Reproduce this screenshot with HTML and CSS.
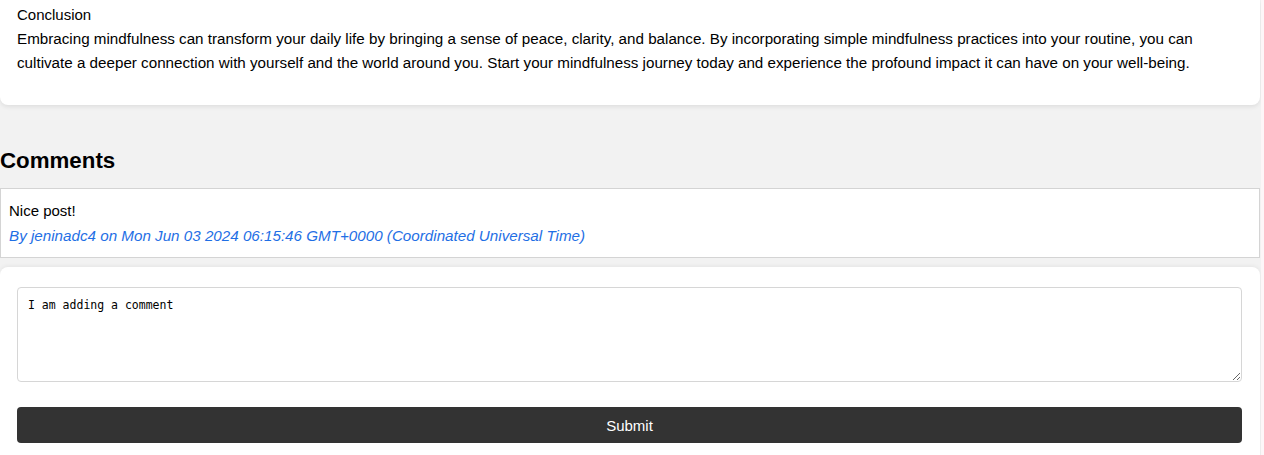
FILE: index.html
```html
<!DOCTYPE html>
<html lang="en">
<head>
<meta charset="utf-8">
<title>Post</title>
<link rel="stylesheet" href="styles.css">
</head>
<body>
<div class="page">
  <article class="post-card">
    <div class="post-line">Conclusion</div>
    <p class="post-text">Embracing mindfulness can transform your daily life by bringing a sense of peace, clarity, and balance. By incorporating simple mindfulness practices into your routine, you can cultivate a deeper connection with yourself and the world around you. Start your mindfulness journey today and experience the profound impact it can have on your well-being.</p>
  </article>

  <section class="comments">
    <h2 class="comments-title">Comments</h2>
    <div class="comment">
      <div class="comment-text">Nice post!</div>
      <div class="comment-meta">By jeninadc4 on Mon Jun 03 2024 06:15:46 GMT+0000 (Coordinated Universal Time)</div>
    </div>
    <form class="comment-form">
      <textarea class="comment-input">I am adding a comment</textarea>
      <button type="button" class="submit-btn">Submit</button>
    </form>
  </section>
</div>
</body>
</html>
```

FILE: styles.css
```css
html {
  background: #fdf6f8;
}
body {
  margin: 0;
  width: 1261px;
  background: #f2f2f2;
  font-family: "Liberation Sans", Arial, sans-serif;
  color: #000;
  min-height: 455px;
}
.page {
  width: 1260px;
}
.post-card {
  background: #fff;
  border-radius: 0 0 8px 8px;
  box-shadow: 0 2px 4px rgba(0, 0, 0, 0.08);
  padding: 3px 17px 30px 17px;
}
.post-line {
  font-size: 15px;
  line-height: 24px;
}
.post-text {
  margin: 0;
  font-size: 15.2px;
  line-height: 24px;
}
.comments-title {
  margin: 42px 0 13px 0;
  font-size: 22.3px;
  line-height: 28px;
  font-weight: bold;
}
.comment {
  background: #fff;
  border: 1px solid #d4d4d4;
  padding: 9px 8px;
  font-size: 15px;
  line-height: 25px;
}
.comment-meta {
  font-style: italic;
  font-size: 15.2px;
  color: #1f6fe5;
}
.comment-form {
  margin-top: 9px;
  background: #fff;
  border-radius: 8px 8px 0 0;
  box-shadow: 0 -1px 4px rgba(0, 0, 0, 0.06);
  padding: 20px 18px 20px 17px;
}
.comment-input {
  display: block;
  box-sizing: border-box;
  width: 100%;
  height: 95px;
  border: 1px solid #d6d6d6;
  border-radius: 4px;
  padding: 10px;
  font-family: "DejaVu Sans Mono", monospace;
  font-size: 11.5px;
  line-height: 14px;
  color: #000;
}
.submit-btn {
  display: block;
  width: 100%;
  height: 36px;
  margin-top: 25px;
  border: none;
  border-radius: 4px;
  background: #333;
  color: #fff;
  font-family: "Liberation Sans", Arial, sans-serif;
  font-size: 15px;
}
```
